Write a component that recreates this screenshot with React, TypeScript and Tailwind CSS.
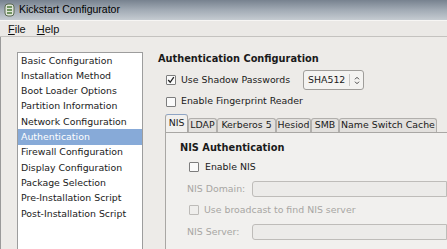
import React from 'react';

const items = [
  'Basic Configuration',
  'Installation Method',
  'Boot Loader Options',
  'Partition Information',
  'Network Configuration',
  'Authentication',
  'Firewall Configuration',
  'Display Configuration',
  'Package Selection',
  'Pre-Installation Script',
  'Post-Installation Script',
];

const tabs = [
  { label: 'NIS', w: 'w-[23px]' },
  { label: 'LDAP', w: 'w-[29px]' },
  { label: 'Kerberos 5', w: 'w-[59px]' },
  { label: 'Hesiod', w: 'w-[35px]' },
  { label: 'SMB', w: 'w-[28px]' },
  { label: 'Name Switch Cache', w: 'w-[98px]' },
];

function Check({ checked, disabled }: { checked?: boolean; disabled?: boolean }) {
  return (
    <div
      className={`w-[10px] h-[10px] border rounded-[1px] flex items-center justify-center shrink-0 ${
        disabled ? 'border-[#bdbbb8] bg-[#efeeec]' : 'border-[#7d7d7d] bg-[#fafafa]'
      }`}
    >
      {checked && (
        <svg width="8" height="8" viewBox="0 0 8 8">
          <path d="M1.2 4 L3.2 6.3 L6.8 1.2" stroke="#222" strokeWidth="1.3" fill="none" />
        </svg>
      )}
    </div>
  );
}

export default function App() {
  const gtk = { fontFamily: '"DejaVu Sans", sans-serif' };
  return (
    <div className="w-[447px] h-[249px] overflow-hidden flex flex-col bg-[#edebe8]" style={gtk}>
      {/* title bar */}
      <div className="h-[20px] shrink-0 flex items-center gap-[4px] pl-[4px] bg-gradient-to-b from-[#77828f] via-[#a2abb5] to-[#c5cbd1]">
        <svg width="11" height="14" viewBox="0 0 11 14">
          <rect x="1" y="1" width="9" height="12" rx="3" fill="#dfe6d8" stroke="#5d6b55" />
          <path d="M3 4 L8 4 M3 7 L8 7 M3 10 L8 10" stroke="#4d7a3a" strokeWidth="1.3" />
        </svg>
        <span className="text-[10.5px] text-black" style={{ fontFamily: '"Liberation Sans", sans-serif' }}>
          Kickstart Configurator
        </span>
      </div>
      {/* menu bar */}
      <div
        className="h-[17px] shrink-0 flex items-center pt-[1px] gap-[11px] pl-[8px] bg-[#ebe9e6] border-t border-[#f7f6f4] border-b border-b-[#c4c2bf] text-[11px] text-[#111]"
        style={{ fontFamily: '"Liberation Sans", sans-serif' }}
      >
        <span>
          <span className="underline">F</span>ile
        </span>
        <span>
          <span className="underline">H</span>elp
        </span>
      </div>
      {/* content */}
      <div className="flex-1 flex border-l border-[#9a9a9a]">
        <div className="pl-[16px] pt-[15px] w-[157px] shrink-0">
          <div className="w-[126px] h-[220px] bg-white border border-[#9d9d9d] text-[9.4px] text-[#1a1a1a]">
            {items.map((it) => (
              <div
                key={it}
                className={`h-[15.3px] flex items-center pl-[3px] ${
                  it === 'Authentication' ? 'bg-[#87aad8] text-white' : ''
                }`}
              >
                {it}
              </div>
            ))}
          </div>
        </div>
        <div className="flex-1 flex flex-col pt-[16px] text-[9.4px] text-[#1a1a1a]">
          <div className="h-[12px] flex items-center font-bold text-[9.8px]">Authentication Configuration</div>
          <div className="mt-[5px] h-[20px] flex items-center pl-[8px]">
            <Check checked />
            <span className="ml-[5px] w-[122px]">Use Shadow Passwords</span>
            <div className="h-[20px] w-[61px] border border-[#9f9d9a] rounded-[3px] bg-[#f4f3f1] flex items-center">
              <span className="pl-[4px] flex-1">SHA512</span>
              <div className="w-[1px] h-[12px] bg-[#c9c7c4]" />
              <div className="w-[13px] flex justify-center">
                <svg width="6" height="9" viewBox="0 0 6 9">
                  <path d="M1 3.3 L3 1.3 L5 3.3 M1 5.7 L3 7.7 L5 5.7" stroke="#444" strokeWidth="1" fill="none" />
                </svg>
              </div>
            </div>
          </div>
          <div className="mt-[5px] h-[13px] flex items-center pl-[8px]">
            <Check />
            <span className="ml-[5px]">Enable Fingerprint Reader</span>
          </div>
          <div className="mt-[6px] flex items-end pl-[7px]">
            {tabs.map((t, i) => (
              <div
                key={t.label}
                className={`${t.w} shrink-0 whitespace-nowrap border border-b-0 rounded-t-[3px] flex items-center justify-center ${
                  i === 0
                    ? 'h-[18px] bg-[#f1f0ee] border-[#a9a7a4] border-t-[#8ea4c4]'
                    : 'h-[14px] bg-[#e2e0dd] border-[#b1afac]'
                }`}
              >
                {t.label}
              </div>
            ))}
          </div>
          <div className="flex-1 ml-[7px] border-t border-l border-[#a9a7a4] bg-[#f1f0ee] pl-[14px] pt-[9px] flex flex-col">
            <div className="h-[12px] flex items-center font-bold text-[9.8px]">NIS Authentication</div>
            <div className="mt-[7px] h-[12px] flex items-center pl-[9px]">
              <Check />
              <span className="ml-[6px]">Enable NIS</span>
            </div>
            <div className="mt-[8px] h-[16px] flex items-center pl-[7px] text-[#a8a6a3]">
              <span className="w-[65px]">NIS Domain:</span>
              <div className="flex-1 h-[16px] border border-[#bebcb9] rounded-l-[3px] bg-[#ecebe9]" />
            </div>
            <div className="mt-[7px] h-[12px] flex items-center pl-[9px] text-[#a8a6a3]">
              <Check disabled />
              <span className="ml-[5px]">Use broadcast to find NIS server</span>
            </div>
            <div className="mt-[8px] h-[16px] flex items-center pl-[7px] text-[#a8a6a3]">
              <span className="w-[65px]">NIS Server:</span>
              <div className="flex-1 h-[16px] border border-[#bebcb9] rounded-l-[3px] bg-[#ecebe9]" />
            </div>
          </div>
        </div>
      </div>
    </div>
  );
}
